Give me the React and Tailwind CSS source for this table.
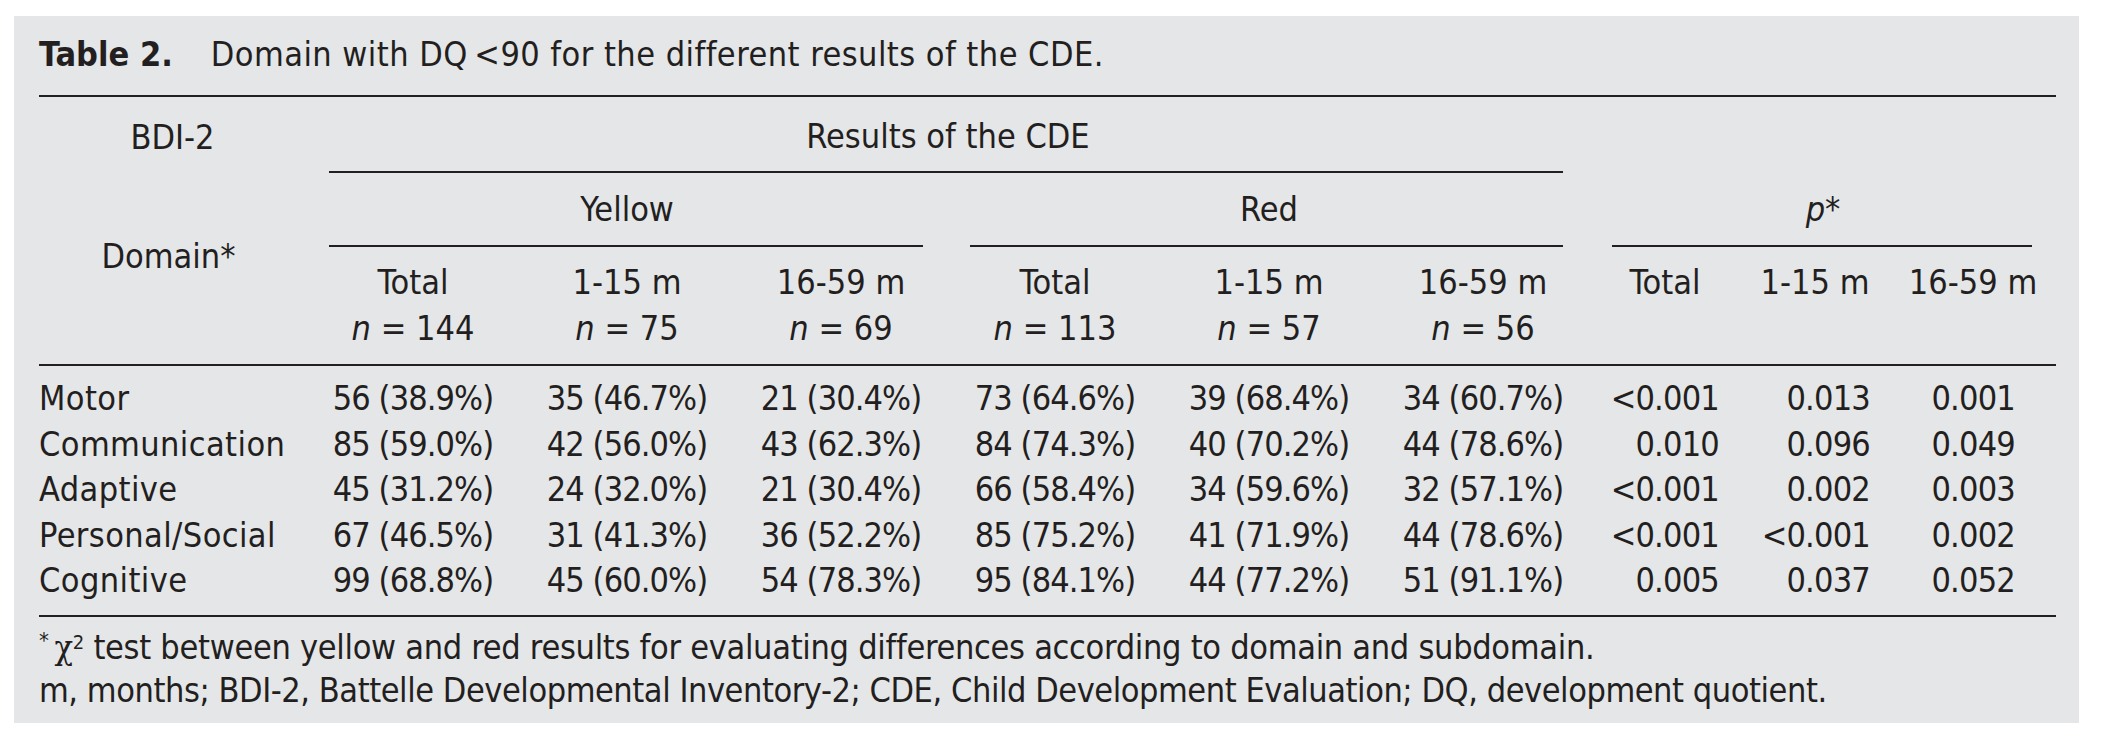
const rows = [
  { domain: 'Motor', vals: ['56 (38.9%)', '35 (46.7%)', '21 (30.4%)', '73 (64.6%)', '39 (68.4%)', '34 (60.7%)'], p: ['<0.001', '0.013', '0.001'] },
  { domain: 'Communication', vals: ['85 (59.0%)', '42 (56.0%)', '43 (62.3%)', '84 (74.3%)', '40 (70.2%)', '44 (78.6%)'], p: ['0.010', '0.096', '0.049'] },
  { domain: 'Adaptive', vals: ['45 (31.2%)', '24 (32.0%)', '21 (30.4%)', '66 (58.4%)', '34 (59.6%)', '32 (57.1%)'], p: ['<0.001', '0.002', '0.003'] },
  { domain: 'Personal/Social', vals: ['67 (46.5%)', '31 (41.3%)', '36 (52.2%)', '85 (75.2%)', '41 (71.9%)', '44 (78.6%)'], p: ['<0.001', '<0.001', '0.002'] },
  { domain: 'Cognitive', vals: ['99 (68.8%)', '45 (60.0%)', '54 (78.3%)', '95 (84.1%)', '44 (77.2%)', '51 (91.1%)'], p: ['0.005', '0.037', '0.052'] },
]

const subHeads = [
  { label: 'Total', n: '144' },
  { label: '1-15 m', n: '75' },
  { label: '16-59 m', n: '69' },
  { label: 'Total', n: '113' },
  { label: '1-15 m', n: '57' },
  { label: '16-59 m', n: '56' },
]

const pPad = ['pr-[21px]', 'pr-[20px]', 'pr-[41px]']
const cols = 'grid grid-cols-[267px_repeat(6,214px)_150px_150px_166px]'

export default function App() {
  return (
    <div className="w-[2104px] h-[737px] bg-white pt-[16px] pl-[14px] text-[#231f20] font-['DejaVu_Sans_Condensed','DejaVu_Sans',sans-serif] font-stretch-condensed text-[34px]">
      <div className="w-[2065px] h-[707px] bg-[#e5e6e8] pt-[18px] pl-[25px] pr-[23px]">
        {/* Caption */}
        <div className="h-[40px] leading-[40px] whitespace-nowrap">
          <span className="font-bold mr-[38px]">Table 2.</span>
          <span className="tracking-[0.45px]">Domain with DQ&#8201;&lt;90 for the different results of the CDE.</span>
        </div>
        <div className="mt-[21px] h-[2px] bg-[#231f20]" />

        {/* Header */}
        <div className={`${cols} grid-rows-[76px_74px_117px] leading-[46px]`}>
          <div className="flex items-center justify-center pt-[4px]">BDI-2</div>
          <div className="col-span-6 flex flex-col">
            <div className="flex-1 flex items-center justify-center pt-[4px]">Results of the CDE</div>
            <div className="ml-[23px] mr-[27px] h-[2px] bg-[#231f20]" />
          </div>
          <div className="col-span-3" />

          <div className="row-span-2 flex justify-center pt-[60px] pr-[8px]">Domain*</div>
          <div className="col-span-3 flex flex-col">
            <div className="flex-1 flex items-center justify-center">Yellow</div>
            <div className="ml-[23px] mr-[25px] h-[2px] bg-[#231f20]" />
          </div>
          <div className="col-span-3 flex flex-col">
            <div className="flex-1 flex items-center justify-center">Red</div>
            <div className="ml-[22px] mr-[27px] h-[2px] bg-[#231f20]" />
          </div>
          <div className="col-span-3 flex flex-col">
            <div className="flex-1 flex items-center justify-center">
              <span className="italic">p</span>*
            </div>
            <div className="ml-[22px] mr-[24px] h-[2px] bg-[#231f20]" />
          </div>

          {subHeads.map((h, i) => (
            <div key={i} className="flex flex-col items-center pt-[12px]">
              <span>{h.label}</span>
              <span><span className="italic">n</span> = {h.n}</span>
            </div>
          ))}
          {['Total', '1-15 m', '16-59 m'].map((l, i) => (
            <div key={'p' + i} className="flex flex-col items-center pt-[12px]">
              <span>{l}</span>
            </div>
          ))}
        </div>
        <div className="h-[2px] bg-[#231f20]" />

        {/* Body */}
        <div className={`${cols} auto-rows-[45.5px] leading-[45.5px] pt-[10px] pb-[11.5px]`}>
          {rows.map(r => (
            <div key={r.domain} className="contents">
              <div className="whitespace-nowrap tracking-[0.4px]">{r.domain}</div>
              {r.vals.map((v, i) => (
                <div key={i} className="text-center whitespace-nowrap tracking-[-0.9px]">{v}</div>
              ))}
              {r.p.map((v, i) => (
                <div key={'p' + i} className={`text-right whitespace-nowrap tracking-[-0.8px] ${pPad[i]}`}>{v}</div>
              ))}
            </div>
          ))}
        </div>
        <div className="h-[2px] bg-[#231f20]" />

        {/* Footnotes */}
        <div className="pt-[8.5px] leading-[43px] whitespace-nowrap">
          <div className="tracking-[-0.3px]">
            <sup className="text-[22px] mr-[6px]">*</sup>
            <span className="font-['DejaVu_Serif',serif]">χ</span>
            <sup className="text-[20px]">2</sup> test between yellow and red results for evaluating differences according to domain and subdomain.
          </div>
          <div className="tracking-[-0.45px]">m, months; BDI-2, Battelle Developmental Inventory-2; CDE, Child Development Evaluation; DQ, development quotient.</div>
        </div>
      </div>
    </div>
  )
}
